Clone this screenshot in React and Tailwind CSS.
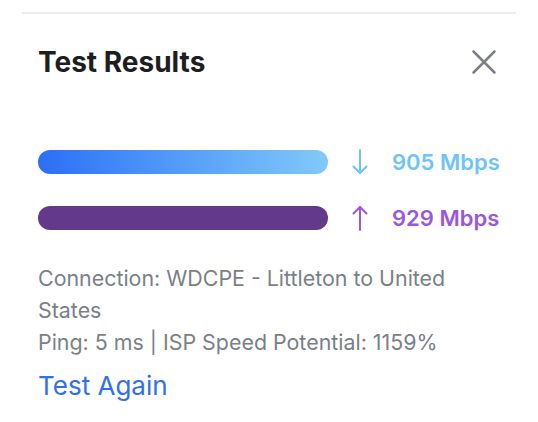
import { X } from 'lucide-react';

function ArrowGlyph({ dir, className }) {
  return (
    <svg width="16" height="26" viewBox="0 0 16 26" fill="none" stroke="currentColor" strokeWidth="2" strokeLinecap="round" strokeLinejoin="round" className={className}>
      {dir === 'down' ? (
        <>
          <path d="M8 1v23" />
          <path d="M1.5 17.5L8 24l6.5-6.5" />
        </>
      ) : (
        <>
          <path d="M8 25V2" />
          <path d="M1.5 8.5L8 2l6.5 6.5" />
        </>
      )}
    </svg>
  );
}

const ROWS = [
  {
    id: 'down',
    value: '905 Mbps',
    bar: 'bg-gradient-to-r from-[#2c6ef6] to-[#82c9f9]',
    text: 'text-[#6ec4f8]',
  },
  {
    id: 'up',
    value: '929 Mbps',
    bar: 'bg-[#62398b]',
    text: 'text-[#9b56df]',
  },
];

function SpeedRow({ row }) {
  return (
    <div className="flex items-center h-[24px]">
      <div className={`h-[24px] w-[290px] shrink-0 rounded-full ${row.bar}`} />
      <ArrowGlyph dir={row.id} className={`ml-[24px] shrink-0 ${row.text}`} />
      <span className={`ml-[24px] text-[22px] font-semibold whitespace-nowrap ${row.text}`}>{row.value}</span>
    </div>
  );
}

export default function App() {
  return (
    <div className="w-[538px] h-[422px] bg-white px-[22px] pt-[12px] font-['Inter','Noto_Sans',sans-serif]">
      <div className="h-[2px] bg-[#ececec]" />
      <div className="px-[16px]">
        <div className="mt-[28px] h-[40px] flex items-center justify-between">
          <h2 className="text-[28px] font-bold text-[#1e1e22] leading-[32px]">Test Results</h2>
          <X className="text-[#7c7f88] -mr-[5px]" size={42} strokeWidth={1.45} />
        </div>

        <div className="mt-[68px] flex flex-col gap-[32px]">
          {ROWS.map((r) => (
            <SpeedRow key={r.id} row={r} />
          ))}
        </div>

        <p className="mt-[32px] text-[21.4px] leading-[32px] text-[#7b7f88]">
          Connection: WDCPE - Littleton to United States
          <br />
          Ping: 5 ms | ISP Speed Potential: 1159%
        </p>
        <button type="button" className="mt-[12px] block text-[26px] leading-[32px] text-[#2f6ff2]">
          Test Again
        </button>
      </div>
    </div>
  );
}
